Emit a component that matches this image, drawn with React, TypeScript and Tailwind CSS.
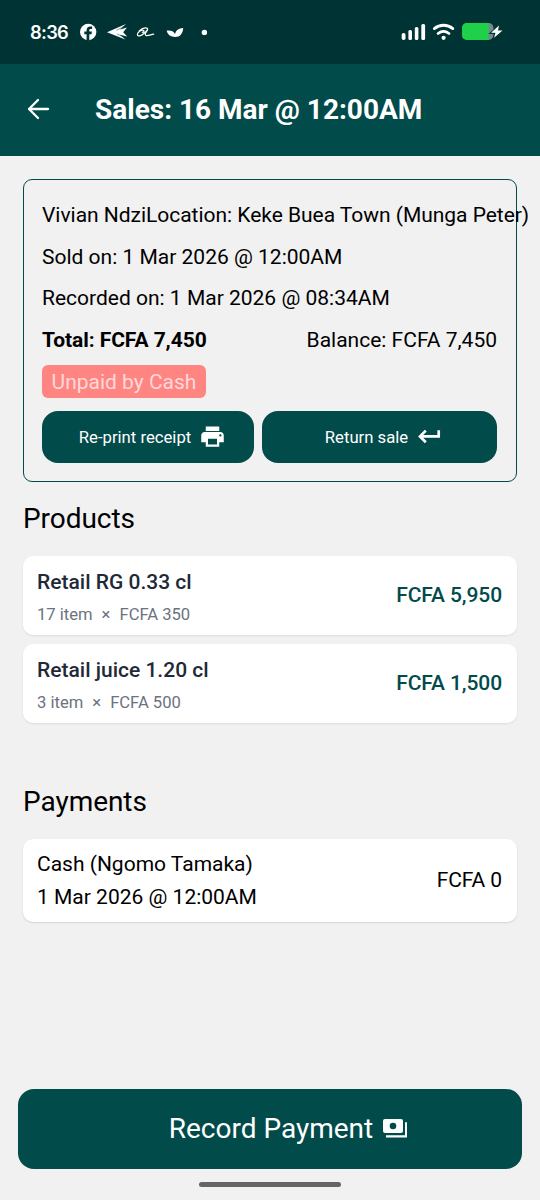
import React from "react";
import { MdPrint } from "react-icons/md";

const products = [
  { name: "Retail RG 0.33 cl", qty: "17 item", price: "FCFA 350", total: "FCFA 5,950" },
  { name: "Retail juice 1.20 cl", qty: "3 item", price: "FCFA 500", total: "FCFA 1,500" },
];

function NotificationIcons() {
  return (
    <svg className="ml-[11px] h-6 w-[132px] text-white" viewBox="79 20 132 24" fill="currentColor">
      <circle cx="88.2" cy="32" r="8.2" />
      <path d="M86.6 40.5v-6.2h-2.3v-2.7h2.3v-1.3c0-2.5 1.3-3.8 3.6-3.8h1.9v2.5h-1.4c-1 0-1.4.5-1.4 1.3v1.3h2.6l-.4 2.7h-2.2v6.2z" fill="#003333" />
      <path d="M107 32.3l19-8.3-6 5.6 7-2.2-3.8 4.9 4 4.3-7.4-1.8 5.6 4.7z" />
      <path d="M126 25.5l-9.5 4.8M126.5 38l-9.5-4" fill="none" stroke="#003333" strokeWidth=".5" />
      <path d="M142.3 32.2c1.2.4 2.4-1.4 1.2-1.9-2.1-.9-6.3 2.1-6.1 4.3.2 2.2 4 1.4 6.8-1.3 2.1-2 4.8-4.6 2.6-5.2-2.2-.5-5.6.9-7.6 2.8M147.5 30c-1.8 2.2-3.2 5.2-1.2 5.6 1.7.3 4.2-.8 7.4-1.5" fill="none" stroke="currentColor" strokeWidth="1.2" strokeLinecap="round" />
      <path d="M166.7 30.7c4.5-.4 7 .8 8.3 3.3 1.1-3.7 3.6-5.9 8.2-6.1-.3 5.6-3.1 9-8 9-4.4 0-7.4-2-8.5-6.2z" />
      <circle cx="204.4" cy="32.4" r="2.7" />
    </svg>
  );
}

function SystemIcons() {
  return (
    <svg className="h-6 w-[104px] text-white" viewBox="400 20 104 24" fill="currentColor">
      <rect x="401.7" y="33" width="3.8" height="7" rx="1.8" />
      <rect x="408.4" y="30" width="3.6" height="10" rx="1.5" />
      <rect x="414.8" y="27" width="3.6" height="13" rx="1.5" />
      <rect x="421.3" y="24" width="3.8" height="16" rx="1.5" />
      <g fill="none" stroke="currentColor" strokeWidth="2.8" strokeLinecap="round">
        <path d="M434.3 28.6c5.4-4.5 13.1-4.5 18.5 0" />
        <path d="M438.1 33.5c3.3-2.6 7.6-2.6 10.9 0" />
      </g>
      <circle cx="443.6" cy="37.8" r="2.1" />
      <clipPath id="battery"><rect x="462" y="23" width="31.5" height="17" rx="5" /></clipPath>
      <g clipPath="url(#battery)">
        <path d="M462 23h32v17h-32z" fill="#728a8b" />
        <path d="M462 23h26.5v17H462z" fill="#1fd04b" />
      </g>
      <path d="M499.5 25.5l-9 7.6h4.8l-1.5 5 8.7-7.2h-4.3z" stroke="#003333" strokeWidth="1.6" />
      <path d="M499 25.4l-7.9 7.3h4.4l-1.4 5 8.4-7.2H498z" />
    </svg>
  );
}

function BackIcon() {
  return (
    <svg className="h-6 w-6" viewBox="0 0 24 24" fill="none" stroke="white" strokeWidth="2.3" strokeLinecap="round" strokeLinejoin="round">
      <path d="M12 2L3 11l9 9M3 11h19" />
    </svg>
  );
}

function ReturnIcon() {
  return (
    <svg className="h-7 w-7" viewBox="0 0 28 28" fill="none" stroke="white" strokeWidth="2.7">
      <path d="M9.8 7.6L4 13.4l5.8 5.8M4 13.4h18.7V7.2" />
    </svg>
  );
}

function PaymentsIcon() {
  return (
    <svg className="h-[19px] w-6" viewBox="0 0 24 19" fill="white">
      <path fillRule="evenodd" d="M2 0h16a2 2 0 0 1 2 2v10a2 2 0 0 1-2 2H2a2 2 0 0 1-2-2V2a2 2 0 0 1 2-2zm8 3.7a3.3 3.3 0 1 0 0 6.6 3.3 3.3 0 0 0 0-6.6z" />
      <path d="M22 3.2h2v15.3H3v-2.2h19z" />
    </svg>
  );
}

export default function App() {
  return (
    <div className="flex h-[1200px] w-[540px] flex-col overflow-hidden bg-[#f1f1f1] font-['Roboto',sans-serif] text-[21px] leading-[25px] text-black">
      <div className="flex h-16 shrink-0 items-center justify-between bg-[#003333] pr-9 pl-[30px]">
        <div className="flex items-center">
          <span className="w-[38px] font-['Inter',sans-serif] text-[18.3px] leading-6 font-semibold tracking-[-0.7px] whitespace-nowrap text-white">8:36</span>
          <NotificationIcons />
        </div>
        <SystemIcons />
      </div>
      <header className="flex h-[92px] shrink-0 items-center bg-[#014b4a] pl-[26px]">
        <BackIcon />
        <h1 className="ml-[45px] text-[28px] leading-8 font-bold whitespace-nowrap text-white">Sales: 16 Mar @ 12:00AM</h1>
      </header>

      <main className="flex grow flex-col px-[23px] pt-[23px]">
        <section className="flex h-[303px] flex-col rounded-[9px] border border-[#014b4a] px-[18px] pt-[23px]">
          <div className="flex flex-col gap-[16.7px] whitespace-nowrap">
            <p className="tracking-[-0.03px]">Vivian NdziLocation: Keke Buea Town (Munga Peter)</p>
            <p>Sold on: 1 Mar 2026 @ 12:00AM</p>
            <p>Recorded on: 1 Mar 2026 @ 08:34AM</p>
            <div className="flex justify-between pr-px">
              <p className="font-bold tracking-[-0.06px]">Total: FCFA 7,450</p>
              <p>Balance: FCFA 7,450</p>
            </div>
          </div>
          <span className="mt-[11.5px] flex h-[33px] w-[164px] shrink-0 items-center justify-center rounded-md bg-[#ff8583] pt-[2px] whitespace-nowrap text-[#ffd8d8]">Unpaid by Cash</span>
          <div className="mt-[13px] flex gap-2 text-[16.7px] text-white">
            <button className="flex h-[52px] w-[212px] items-center justify-center gap-2 rounded-2xl bg-[#014b4a] pl-[9px] whitespace-nowrap">
              <span className="pt-px">Re-print receipt</span> <MdPrint size={27} />
            </button>
            <button className="flex h-[52px] w-[235px] items-center justify-center gap-2 rounded-2xl bg-[#014b4a] pl-[10px] whitespace-nowrap">
              <span className="pt-px">Return sale</span> <ReturnIcon />
            </button>
          </div>
        </section>

        <h2 className="mt-5 text-[28px] leading-[33px] tracking-[-0.05px]">Products</h2>
        <div className="mt-[21px] flex flex-col gap-[9px]">
          {products.map((p) => (
            <div key={p.name} className="flex h-[79px] items-center justify-between rounded-[10px] bg-white pr-[15px] pl-[14px] shadow-[0_1px_2px_rgba(0,0,0,0.09)]">
              <div className="pt-[5px]">
                <p className="font-medium text-[#1f2937]">{p.name}</p>
                <p className="mt-[7px] flex gap-[9px] text-[16.6px] text-[#6b7280]">
                  <span>{p.qty}</span><span>×</span><span>{p.price}</span>
                </p>
              </div>
              <p className="font-medium tracking-[-0.08px] text-[#014b4a]">{p.total}</p>
            </div>
          ))}
        </div>

        <h2 className="mt-[62px] text-[28px] leading-[33px] tracking-[-0.05px]">Payments</h2>
        <div className="mt-[21px] flex h-[83px] items-center justify-between rounded-[10px] bg-white pr-[15px] pl-[14px] shadow-[0_1px_2px_rgba(0,0,0,0.13)]">
          <div className="flex flex-col gap-2">
            <p>Cash (Ngomo Tamaka)</p>
            <p>1 Mar 2026 @ 12:00AM</p>
          </div>
          <p className="tracking-[-0.08px]">FCFA 0</p>
        </div>
      </main>

      <footer className="flex h-[111px] shrink-0 flex-col items-center">
        <button className="flex h-20 w-[504px] items-center justify-center gap-[10px] rounded-2xl bg-[#014b4a] pb-[2px] pl-9 text-[28px] whitespace-nowrap text-white">
          Record Payment <PaymentsIcon />
        </button>
        <div className="mt-[13px] h-[5px] w-[142px] rounded-full bg-[#656565]" />
      </footer>
    </div>
  );
}
